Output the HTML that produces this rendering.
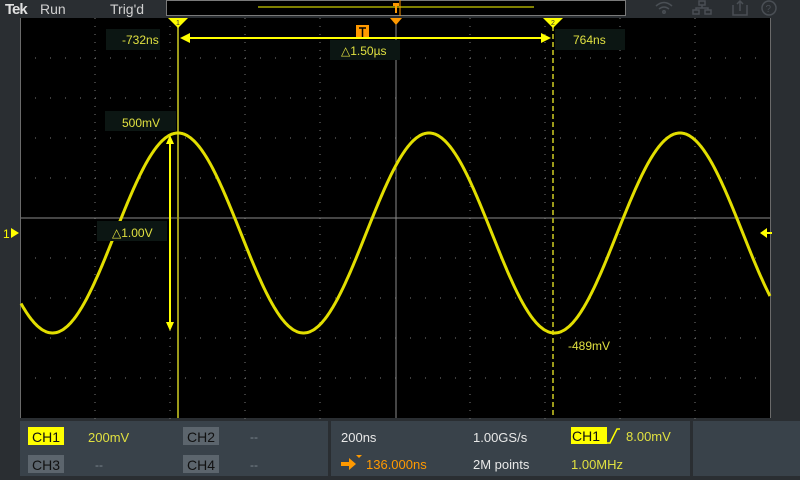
<!DOCTYPE html>
<html><head><meta charset="utf-8"><style>
html,body{margin:0;padding:0;background:#2b2f33;width:800px;height:480px;overflow:hidden}
svg{display:block}
text{font-family:"Liberation Sans","DejaVu Sans",sans-serif}
</style></head><body>
<svg id="s" width="800" height="480" viewBox="0 0 800 480" xmlns="http://www.w3.org/2000/svg">
<rect x="0" y="0" width="800" height="480" fill="#2a2e32"/>
<text x="5" y="14" font-size="15" font-weight="bold" fill="#e0e0e0" letter-spacing="-1">Tek</text>
<text x="40" y="14" font-size="14" fill="#d0d0d0">Run</text>
<text x="110" y="14" font-size="14" fill="#d0d0d0">Trig'd</text>
<rect x="166.5" y="0.5" width="459" height="15" fill="#000" stroke="#7a7a7a"/>
<line x1="258" y1="7" x2="534" y2="7" stroke="#ffff00" stroke-width="1"/>
<line x1="400" y1="0" x2="400" y2="16" stroke="#ff9900" stroke-width="1"/>
<rect x="393" y="3" width="6" height="3" fill="#ff9900"/>
<rect x="395" y="5" width="2" height="8" fill="#ff9900"/>
<g stroke="#4a4f55" fill="none" stroke-width="1.5">
<path d="M656 6 q8-7 16 0 M659 9 q5-4 10 0"/><circle cx="664" cy="12" r="1.2"/>
<rect x="699" y="1" width="6" height="4"/><rect x="693" y="10" width="6" height="4"/><rect x="705" y="10" width="6" height="4"/><path d="M702 5v3M696 10V8h12v2"/>
<path d="M733 5v10h14V5M740 11V1M737 4l3-3 3 3"/>
<circle cx="769" cy="8" r="7"/>
</g>
<text x="765.5" y="12" font-size="10" fill="#4a4f55">?</text>
<rect x="20" y="18" width="751" height="400" fill="#000"/>
<g id="grid"></g>
<line x1="20" y1="218" x2="771" y2="218" stroke="#8a8a8a" stroke-width="1"/>
<line x1="396" y1="18" x2="396" y2="418" stroke="#8a8a8a" stroke-width="1"/>
<line x1="20.5" y1="18" x2="20.5" y2="418" stroke="#6a6a6a"/>
<line x1="770.5" y1="18" x2="770.5" y2="418" stroke="#6a6a6a"/>
<line x1="178" y1="18" x2="178" y2="418" stroke="#9c9a1a" stroke-width="2"/>
<line x1="553" y1="18" x2="553" y2="418" stroke="#9c9a1a" stroke-width="2" stroke-dasharray="5,3"/>
<polyline id="wave" fill="none" stroke="#e2de00" stroke-width="3"/>
<path d="M168 18h20l-10 10z" fill="#ffff00"/>
<path d="M543 18h20l-10 10z" fill="#ffff00"/>
<text x="176" y="25" font-size="7" fill="#333">1</text>
<text x="551" y="25" font-size="7" fill="#333">2</text>
<path d="M390 18h12l-6 7z" fill="#ff9900"/>
<rect x="356" y="25" width="13" height="12" fill="#ff9900"/>
<path d="M359 28h7M362.5 28v9" stroke="#000" stroke-width="1.5"/>
<line x1="186" y1="38" x2="545" y2="38" stroke="#ffff00" stroke-width="2"/>
<path d="M180 38l10-5v10z M551 38l-10-5v10z" fill="#ffff00"/>
<rect x="106" y="29" width="54" height="21" fill="#0c1613"/>
<text x="122" y="44" font-size="12" fill="#e0e040">-732ns</text>
<rect x="555" y="29" width="70" height="21" fill="#0c1613"/>
<text x="573" y="44" font-size="12" fill="#e0e040">764ns</text>
<rect x="330" y="40" width="70" height="20" fill="#0c1613"/>
<text x="341" y="55" font-size="12" fill="#e0e040">△1.50µs</text>
<line x1="170" y1="142" x2="170" y2="324" stroke="#ffff00" stroke-width="2"/>
<path d="M170 135l-4 9h8z M170 331l-4-9h8z" fill="#ffff00"/>
<rect x="105" y="111" width="71" height="20" fill="#0c1613"/>
<text x="122" y="127" font-size="12" fill="#e0e040">500mV</text>
<rect x="97" y="221" width="70" height="20" fill="#0c1613"/>
<text x="112" y="237" font-size="12" fill="#e0e040">△1.00V</text>
<text x="568" y="350" font-size="12" fill="#e0e040">-489mV</text>
<text x="3" y="238" font-size="12" fill="#ffff00">1</text>
<path d="M11 228l8 5-8 5z" fill="#ffff00"/>
<path d="M760 233l7-5v10z" fill="#ffff00"/><line x1="765" y1="233" x2="772" y2="233" stroke="#ffff00" stroke-width="2"/>
<rect x="20" y="421" width="308" height="55" fill="#39424a"/>
<rect x="331" y="421" width="359" height="55" fill="#39424a"/>
<rect x="693" y="421" width="107" height="55" fill="#39424a"/>
<rect x="28" y="427" width="36" height="18" fill="#ffff00"/>
<text x="32" y="442" font-size="14" fill="#111">CH1</text>
<text x="88" y="442" font-size="13" fill="#e0e040">200mV</text>
<rect x="183" y="427" width="36" height="18" fill="#5c656d"/>
<text x="187" y="442" font-size="14" fill="#111">CH2</text>
<text x="250" y="441" font-size="12" fill="#7c858d">--</text>
<rect x="28" y="455" width="36" height="18" fill="#5c656d"/>
<text x="32" y="470" font-size="14" fill="#111">CH3</text>
<text x="95" y="469" font-size="12" fill="#7c858d">--</text>
<rect x="183" y="455" width="36" height="18" fill="#5c656d"/>
<text x="187" y="470" font-size="14" fill="#111">CH4</text>
<text x="250" y="469" font-size="12" fill="#7c858d">--</text>
<text x="341" y="442" font-size="13" fill="#e8e8e8">200ns</text>
<text x="473" y="442" font-size="13" fill="#e8e8e8">1.00GS/s</text>
<rect x="571" y="427" width="36" height="17" fill="#ffff00"/>
<text x="572" y="441" font-size="14" fill="#111">CH1</text>
<path d="M607 443h3l7-14h3" stroke="#ffff00" stroke-width="1.5" fill="none"/>
<text x="626" y="441" font-size="13" fill="#e0e040">8.00mV</text>
<path d="M341 462h8v-4l7 6-7 6v-4h-8z" fill="#ff9900"/>
<path d="M356 455h6l-3 3z" fill="#ff9900"/>
<text x="366" y="469" font-size="13" fill="#ff9900">136.000ns</text>
<text x="473" y="469" font-size="13" fill="#e8e8e8">2M points</text>
<text x="571" y="469" font-size="13" fill="#e0e040">1.00MHz</text>
</svg>
<script>
var g=document.getElementById("grid"),h="";
for(var i=1;i<10;i++){var x=20+75*i;if(x==395)continue;for(var y=18;y<=418;y+=8)h+='<rect x="'+(x-0.5)+'" y="'+y+'" width="1" height="1" fill="#777"/>';}
for(var j=1;j<10;j++){var y=18+40*j;if(y==218)continue;for(var x=20;x<=771;x+=15)h+='<rect x="'+x+'" y="'+(y-0.5)+'" width="1" height="1" fill="#777"/>';}
g.innerHTML=h;
var p=[];for(var x=21;x<=770;x+=1){p.push(x+","+(233-100*Math.cos(2*Math.PI*(x-178)/251)).toFixed(1));}
document.getElementById("wave").setAttribute("points",p.join(" "));
</script>
</body></html>
